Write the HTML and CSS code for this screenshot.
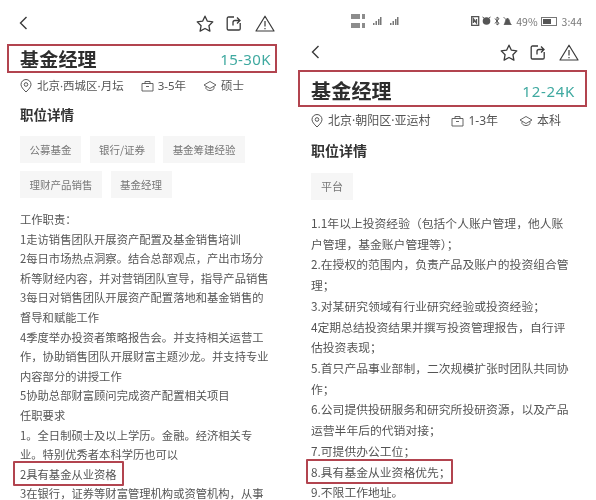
FILE: index.html
```html
<!DOCTYPE html>
<html lang="zh-CN">
<head>
<meta charset="utf-8">
<title>基金经理</title>
<link rel="stylesheet" href="styles.css">
</head>
<body>
<svg class="defs" width="0" height="0" aria-hidden="true">
  <defs>
    <symbol id="back" viewBox="0 0 9 14"><path d="M7.5 1 1.500 7l6 6" fill="none" stroke="currentColor" stroke-width="1.400"/></symbol>
    <symbol id="star" viewBox="0 0 18 17"><path d="M9 1.200l2.400 5 5.400.7-3.900 3.800 1 5.400L9 13.500l-4.900 2.600 1-5.400L1.200 6.900l5.400-.7z" fill="none" stroke="currentColor" stroke-width="1.300" stroke-linejoin="round"/></symbol>
    <symbol id="share" viewBox="0 0 16 16"><path d="M8 2H2.500A1.300 1.300 0 0 0 1.200 3.300v10.400A1.300 1.300 0 0 0 2.500 15h10.400a1.300 1.300 0 0 0 1.300-1.300V8M7 10.500V7.500a2 2 0 0 1 2-2h4.500M11 2.500l3 3-3 3" fill="none" stroke="currentColor" stroke-width="1.300"/></symbol>
    <symbol id="warn" viewBox="0 0 20 17"><path d="M10 1.200 1 16h18zM10 6v5.500M10 13v1.300" fill="none" stroke="currentColor" stroke-width="1.200" stroke-linejoin="round"/></symbol>
    <symbol id="pin" viewBox="0 0 12 14"><path d="M6 13C3 10 1 7.900 1 5.500a5 5 0 0 1 10 0C11 7.900 9 10 6 13z" fill="none" stroke="currentColor"/><circle cx="6" cy="5.500" r="1.800" fill="none" stroke="currentColor"/></symbol>
    <symbol id="case" viewBox="0 0 13 12"><path d="M1 3.500h11V11H1zM4 3.500V1.500h5v2M5 6.500h3" fill="none" stroke="currentColor" stroke-width=".9"/></symbol>
    <symbol id="cap" viewBox="0 0 14 12"><path d="M7 1.500 13 5 7 8.500 1 5zM3 6.500v2.200C4 10 5.500 10.500 7 10.500s3-.5 4-1.800V6.500" fill="none" stroke="currentColor" stroke-width=".9"/></symbol>
  </defs>
</svg>
<main class="page">
  <section class="panel panel-left">
    <header class="nav">
      <svg class="ic-back"><use href="#back"/></svg>
      <div class="actions">
        <svg class="ic-star"><use href="#star"/></svg>
        <svg class="ic-share"><use href="#share"/></svg>
        <svg class="ic-warn"><use href="#warn"/></svg>
      </div>
    </header>
    <div class="title-box">
      <h1>基金经理</h1>
      <span class="salary">15-30K</span>
    </div>
    <ul class="meta">
      <li><svg class="ic-pin"><use href="#pin"/></svg>北京·西城区·月坛</li>
      <li><svg class="ic-case"><use href="#case"/></svg>3-5年</li>
      <li><svg class="ic-cap"><use href="#cap"/></svg>硕士</li>
    </ul>
    <h2>职位详情</h2>
    <div class="tags">
      <span class="tag">公募基金</span>
      <span class="tag">银行/证券</span>
      <span class="tag">基金筹建经验</span>
      <span class="tag">理财产品销售</span>
      <span class="tag">基金经理</span>
    </div>
    <div class="desc">
      工作职责：<br>
      1走访销售团队开展资产配置及基金销售培训<br>
      2每日市场热点洞察。结合总部观点，产出市场分<br>
      析等财经内容，并对营销团队宣导，指导产品销售<br>
      3每日对销售团队开展资产配置落地和基金销售的<br>
      督导和赋能工作<br>
      4季度举办投资者策略报告会。并支持相关运营工<br>
      作，协助销售团队开展财富主题沙龙。并支持专业<br>
      内容部分的讲授工作<br>
      5协助总部财富顾问完成资产配置相关项目<br>
      任职要求<br>
      1。全日制硕士及以上学历。金融。经济相关专<br>
      业。特别优秀者本科学历也可以
      <span class="mark">2具有基金从业资格</span>
      3在银行，证券等财富管理机构或资管机构，从事
    </div>
  </section>
  <section class="panel panel-right">
    <div class="status">
      <div class="signal">
        <div class="sims"><i></i><i></i></div>
        <svg class="bars" viewBox="0 0 32 10"><path d="M6 9V7h1.500v2zM8.500 9V5H10v4zM11 9V3h1.500v6zM13 9V1h1.500v8zM23 9V7h1.500v2zM25.500 9V5H27v4zM28 9V3h1.500v6zM30 9V1h1.500v8z" fill="currentColor"/></svg>
      </div>
      <div class="sys">
        <svg class="sys-icons" viewBox="0 0 42 10"><path d="M.7.700h7v8.600h-7zM2.500 7V3l3 4V3" fill="none" stroke="currentColor" stroke-width="1.300"/><circle cx="15.500" cy="5" r="3.800" fill="currentColor"/><path d="M11.500 1l1.500 1M19.500 1 18 2" stroke="currentColor"/><path d="M24 2.500l4 5-2 1.500V1l2 1.500-4 5" fill="none" stroke="currentColor"/><path d="M33 8.500c1.500-1 1-5 3.500-6.500 2.500 1.500 2 5.500 3.500 6.500zM32.500 1l8 8" fill="currentColor" stroke="currentColor" stroke-width=".8"/></svg>
        <span>49%</span>
        <span class="battery"><i></i></span>
        <span class="time">3:44</span>
      </div>
    </div>
    <header class="nav">
      <svg class="ic-back"><use href="#back"/></svg>
      <div class="actions">
        <svg class="ic-star"><use href="#star"/></svg>
        <svg class="ic-share"><use href="#share"/></svg>
        <svg class="ic-warn"><use href="#warn"/></svg>
      </div>
    </header>
    <div class="title-box">
      <h1>基金经理</h1>
      <span class="salary">12-24K</span>
    </div>
    <ul class="meta">
      <li><svg class="ic-pin"><use href="#pin"/></svg>北京·朝阳区·亚运村</li>
      <li><svg class="ic-case"><use href="#case"/></svg>1-3年</li>
      <li><svg class="ic-cap"><use href="#cap"/></svg>本科</li>
    </ul>
    <h2>职位详情</h2>
    <div class="tags">
      <span class="tag">平台</span>
    </div>
    <div class="desc">
      1.1年以上投资经验（包括个人账户管理，他人账<br>
      户管理，基金账户管理等）；<br>
      2.在授权的范围内，负责产品及账户的投资组合管<br>
      理；<br>
      3.对某研究领域有行业研究经验或投资经验；<br>
      4定期总结投资结果并撰写投资管理报告，自行评<br>
      估投资表现；<br>
      5.首只产品事业部制，二次规模扩张时团队共同协<br>
      作；<br>
      6.公司提供投研服务和研究所投研资源，以及产品<br>
      运营半年后的代销对接；<br>
      7.可提供办公工位；
      <span class="mark">8.具有基金从业资格优先；</span>
      9.不限工作地址。
    </div>
  </section>
</main>
</body>
</html>
```
FILE: styles.css
```css
* { box-sizing: border-box; }
html, body { margin: 0; padding: 0; background: #fff; }
body {
  width: 596px;
  height: 500px;
  overflow: hidden;
  font-family: "Noto Sans CJK SC", "Noto Sans", sans-serif;
  color: #333;
}
.defs { display: block; height: 0; }
.page {
  display: grid;
  grid-template-columns: 298px 298px;
  height: 500px;
  overflow: hidden;
  filter: blur(0.45px);
}
.panel { padding-left: 20px; min-width: 0; overflow: hidden; height: 500px; }
.panel-right { padding-left: 13px; }

.nav { display: flex; justify-content: space-between; align-items: center; color: #3a3a3a; }
.actions { display: flex; align-items: center; }
.panel-left .nav { height: 16px; margin: 15px 0 0 -1px; padding-right: 23px; }
.panel-right .nav { height: 18px; margin-top: 9px; padding-right: 17px; }
.ic-back { width: 9px; height: 14px; }
.ic-star { width: 18px; height: 17px; }
.ic-share { width: 16px; height: 16px; margin-left: 12px; }
.ic-warn { width: 20px; height: 17px; margin-left: 13px; }

.title-box {
  display: flex;
  justify-content: space-between;
  align-items: center;
  border: 2px solid #b2444f;
}
.panel-left .title-box {
  width: 270px; height: 29px;
  margin: 13px 0 0 -13px;
  padding: 0 4px 0 11px;
}
.panel-right .title-box {
  width: 289px; height: 37px;
  margin: 9px 0 0 -13px;
  padding: 4px 10px 0 11px;
}
h1 { margin: 0; font-size: 19px; line-height: 24px; font-weight: 700; color: #2e2e2e; letter-spacing: .2px; }
.panel-right h1 { font-size: 20px; }
.salary { font-family: "Noto Sans", sans-serif; font-size: 15px; line-height: 20px; color: #3fa9a0; letter-spacing: .4px; }
.panel-right .salary { letter-spacing: .7px; }

.meta { display: flex; list-style: none; margin: 0; padding: 0; color: #555; font-family: "Noto Sans", "Noto Sans CJK SC", sans-serif; font-size: 11.500px; line-height: 16px; }
.panel-left .meta { margin-top: 5px; }
.panel-right .meta { margin-top: 6px; font-size: 12px; }
.meta li { display: flex; align-items: center; white-space: nowrap; }
.meta li + li { margin-left: 17px; }
.panel-right .meta li + li { margin-left: 21px; }
.ic-pin { width: 12px; height: 14px; margin-right: 5px; }
.ic-case { width: 13px; height: 12px; margin-right: 4px; }
.ic-cap { width: 14px; height: 12px; margin-right: 4px; }

h2 { margin: 0; font-size: 13.500px; line-height: 18px; font-weight: 700; color: #333; }
.panel-left h2 { margin-top: 11px; }
.panel-right h2 { margin-top: 12px; font-size: 14px; }

.tags { display: flex; flex-wrap: wrap; gap: 8px 8.500px; }
.panel-left .tags { margin-top: 13px; width: 240px; }
.panel-right .tags { margin-top: 14px; }
.tag {
  height: 27px;
  padding: 0 9.500px;
  background: #f6f6f6;
  color: #777;
  font-size: 10.500px;
  line-height: 27px;
}
.panel-right .tag { padding: 0 10px; font-size: 11px; }

.desc { color: #555; white-space: nowrap; }
.panel-left .desc { margin-top: 12px; font-size: 11.300px; line-height: 19.600px; }
.panel-right .desc { margin-top: 13px; font-size: 11.800px; line-height: 20.700px; }
.mark {
  display: block;
  width: fit-content;
  height: 25px;
  line-height: 23px;
  border: 2px solid #b2444f;
  border-radius: 1px;
  padding: 0 5px;
  margin: -3.700px 0 -1.700px -7px;
}
.panel-right .mark { margin: -2.700px 0 -1.600px -5px; padding: 0 0 0 3px; line-height: 21px; }

.status { display: flex; justify-content: space-between; align-items: center; height: 34px; padding: 8px 14px 0 40px; color: #777; font-size: 10.500px; }
.signal { display: flex; align-items: center; gap: 2px; }
.sims { display: flex; flex-direction: column; gap: 4px; }
.sims i { display: block; width: 14px; height: 5px; background: linear-gradient(to right, #8c8c8c 9px, transparent 9px, transparent 10.500px, #8c8c8c 10.500px); }
.bars { width: 32px; height: 10px; }
.sys { display: flex; align-items: center; gap: 3px; }
.sys-icons { width: 42px; height: 10px; color: #555; }
.battery { display: block; width: 16px; height: 9px; border: 1px solid #777; padding: 1px; }
.battery i { display: block; width: 8px; height: 100%; background: #555; }
.time { margin-left: 2px; }
```
